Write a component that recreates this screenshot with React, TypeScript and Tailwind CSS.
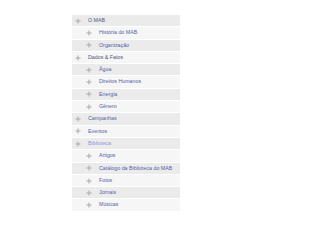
import React from "react";

type Item = { label: string; level: 0 | 1; tone: "dark" | "link" | "active" };

const items: Item[] = [
  { label: "O MAB", level: 0, tone: "dark" },
  { label: "História do MAB", level: 1, tone: "link" },
  { label: "Organização", level: 1, tone: "link" },
  { label: "Dados & Fatos", level: 0, tone: "dark" },
  { label: "Água", level: 1, tone: "link" },
  { label: "Direitos Humanos", level: 1, tone: "link" },
  { label: "Energia", level: 1, tone: "link" },
  { label: "Gênero", level: 1, tone: "link" },
  { label: "Campanhas", level: 0, tone: "link" },
  { label: "Eventos", level: 0, tone: "link" },
  { label: "Biblioteca", level: 0, tone: "active" },
  { label: "Artigos", level: 1, tone: "link" },
  { label: "Catálogo da Biblioteca do MAB", level: 1, tone: "link" },
  { label: "Fotos", level: 1, tone: "link" },
  { label: "Jornais", level: 1, tone: "link" },
  { label: "Músicas", level: 1, tone: "link" },
];

const Bullet = () => (
  <svg width="6" height="6" viewBox="0 0 6 6" className="shrink-0">
    <path d="M3 0.5V5.5M0.5 3H5.5" stroke="#a8a8a8" strokeWidth="1" />
  </svg>
);

export default function App() {
  return (
    <div className="w-[320px] h-[240px] bg-white pt-[15px] pl-[72px]" style={{ fontFamily: "Arial, 'Liberation Sans', sans-serif" }}>
      <ul className="w-[108px]">
        {items.map((item, i) => (
          <li
            key={i}
            className={`flex items-center h-[12.3px] gap-[7px] border-b border-white text-[5.3px] leading-none whitespace-nowrap ${
              i % 2 === 0 ? "bg-[#ebebeb]" : "bg-[#f6f6f6]"
            } ${item.level === 0 ? "pl-[3px]" : "pl-[14px]"}`}
          >
            <Bullet />
            <span
              className={
                item.tone === "dark"
                  ? "text-[#4a5580]"
                  : item.tone === "active"
                  ? "text-[#8a97d8]"
                  : "text-[#5262a8]"
              }
            >
              {item.label}
            </span>
          </li>
        ))}
      </ul>
    </div>
  );
}
